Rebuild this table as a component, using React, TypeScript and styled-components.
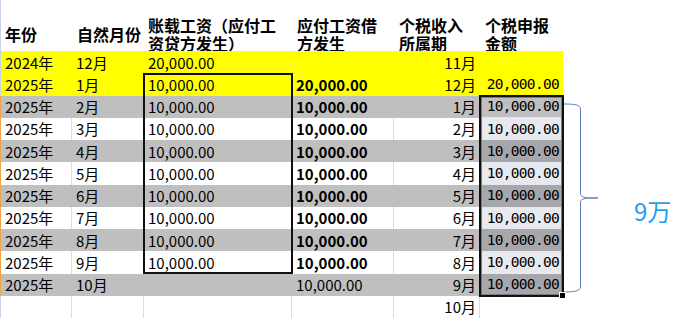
import React from "react";
import styled, { createGlobalStyle } from "styled-components";

const GlobalStyle = createGlobalStyle`
  html, body {
    margin: 0;
    padding: 0;
    background: #ffffff;
  }
  body {
    font-family: "Noto Sans CJK SC", "Noto Sans", sans-serif;
    color: #000;
  }
`;

const COLS = [72, 72, 148, 102, 86, 83];
const HEADER_H = 51;
const ROW_H = 22.25;

type Tone = "yellow" | "grey" | "white";
type Sel = "active" | "tint" | undefined;

const toneBg = (tone: Tone, sel: Sel) => {
  if (sel === "active") return "#bfbfbf";
  if (sel === "tint") return tone === "grey" ? "#a6a7ac" : "#e7e9f1";
  if (tone === "yellow") return "#ffff00";
  if (tone === "grey") return "#bfbfbf";
  return "#ffffff";
};

const Page = styled.div`
  display: flex;
  align-items: flex-start;
  width: 699px;
  height: 324px;
  overflow: hidden;
`;

const Sheet = styled.div`
  position: relative;
  display: grid;
  grid-template-columns: ${COLS.map((c) => c + "px").join(" ")};
  grid-template-rows: ${HEADER_H}px repeat(12, ${ROW_H}px);
`;

const HeadCell = styled.div<{ $pad?: number; $lead?: boolean }>`
  display: flex;
  align-items: center;
  padding: 16px 0 0 ${(p) => p.$pad ?? 5}px;
  font-size: 16px;
  font-weight: 700;
  line-height: 18px;
  white-space: nowrap;
  border-left: ${(p) => (p.$lead ? "1px solid #c9d3e6" : "none")};
`;

const Cell = styled.div<{
  $tone: Tone;
  $right?: boolean;
  $bold?: boolean;
  $mono?: boolean;
  $sel?: Sel;
  $lead?: string;
  $last?: boolean;
}>`
  box-sizing: border-box;
  display: flex;
  align-items: center;
  justify-content: ${(p) => (p.$right ? "flex-end" : "flex-start")};
  padding: ${(p) => (p.$right ? "0 3px 0 0" : "0 0 0 4px")};
  background: ${(p) => toneBg(p.$tone, p.$sel)};
  border-left: ${(p) => (p.$lead ? `1px solid ${p.$lead}` : "none")};
  border-right: 1px solid
    ${(p) => (p.$tone === "white" && !p.$last ? "#d5dbe8" : "transparent")};
  box-shadow: ${(p) =>
    p.$sel === "active" ? "inset 0 0 0 1px #e4e4e4" : "none"};
  font-family: ${(p) =>
    p.$mono
      ? '"DejaVu Sans Mono", "Liberation Mono", monospace'
      : '"Noto Sans CJK SC", "Noto Sans", sans-serif'};
  font-size: ${(p) => (p.$mono ? "14.5px" : "15px")};
  letter-spacing: ${(p) => (p.$mono ? "-0.7px" : "normal")};
  font-weight: ${(p) => (p.$bold ? 700 : 400)};
  white-space: nowrap;
  line-height: 1;
`;

const Outline = styled.div<{ $top: number; $left: number; $w: number; $h: number; $thick: number }>`
  position: absolute;
  box-sizing: border-box;
  top: ${(p) => p.$top}px;
  left: ${(p) => p.$left}px;
  width: ${(p) => p.$w}px;
  height: ${(p) => p.$h}px;
  border: ${(p) => p.$thick}px solid #111;
  pointer-events: none;
`;

const SelectionFrame = styled(Outline)`
  box-shadow: inset 0 0 0 1px #7c7c7c;
`;

const FillHandle = styled.div`
  position: absolute;
  right: -4px;
  bottom: -4px;
  width: 5px;
  height: 5px;
  background: #000;
  border: 1px solid #fff;
`;

const Brace = styled.svg`
  flex: none;
  margin-top: 101px;
  margin-left: -1px;
`;

const Note = styled.div`
  margin: 199px 0 0 34px;
  font-size: 24px;
  line-height: 24px;
  color: #1ea0f0;
  white-space: nowrap;
`;

type Row = {
  year: string;
  month: string;
  booked: string;
  debit: string;
  debitBold: boolean;
  period: string;
  declared: string;
};

const rows: Row[] = [
  { year: "2024年", month: "12月", booked: "20,000.00", debit: "", debitBold: false, period: "11月", declared: "" },
  { year: "2025年", month: "1月", booked: "10,000.00", debit: "20,000.00", debitBold: true, period: "12月", declared: "20,000.00" },
  ...[2, 3, 4, 5, 6, 7, 8, 9].map((m) => ({
    year: "2025年",
    month: `${m}月`,
    booked: "10,000.00",
    debit: "10,000.00",
    debitBold: true,
    period: `${m - 1}月`,
    declared: "10,000.00",
  })),
  { year: "2025年", month: "10月", booked: "", debit: "10,000.00", debitBold: false, period: "9月", declared: "10,000.00" },
  { year: "", month: "", booked: "", debit: "", debitBold: false, period: "10月", declared: "" },
];

const toneOf = (i: number): Tone => {
  if (i < 2) return "yellow";
  if (i === 11) return "white";
  return i % 2 === 0 ? "grey" : "white";
};

const selOf = (i: number): Sel => {
  if (i === 2) return "active";
  if (i > 2 && i <= 10) return "tint";
  return undefined;
};

const colLeft = (c: number) => COLS.slice(0, c).reduce((a, b) => a + b, 0);
const rowTop = (r: number) => HEADER_H + r * ROW_H;

export default function App() {
  return (
    <Page>
      <GlobalStyle />
      <Sheet>
        <HeadCell $pad={4} $lead>年份</HeadCell>
        <HeadCell>自然月份</HeadCell>
        <HeadCell $pad={4}>
          账载工资（应付工
          <br />
          资贷方发生）
        </HeadCell>
        <HeadCell>
          应付工资借
          <br />
          方发生
        </HeadCell>
        <HeadCell>
          个税收入
          <br />
          所属期
        </HeadCell>
        <HeadCell>
          个税申报
          <br />
          金额
        </HeadCell>

        {rows.map((r, i) => {
          const tone = toneOf(i);
          const lead = i >= 2 && i <= 10 ? "#f0a24a" : "#c9d3e6";
          return (
            <React.Fragment key={i}>
              <Cell $tone={tone} $lead={lead}>{r.year}</Cell>
              <Cell $tone={tone}>{r.month}</Cell>
              <Cell $tone={tone}>{r.booked}</Cell>
              <Cell $tone={tone} $bold={r.debitBold}>{r.debit}</Cell>
              <Cell $tone={tone} $right>{r.period}</Cell>
              <Cell $tone={tone} $right $mono $sel={selOf(i)} $last>
                {r.declared}
              </Cell>
            </React.Fragment>
          );
        })}

        <Outline
          $thick={2}
          $top={rowTop(1) - 0.5}
          $left={colLeft(2) - 1}
          $w={COLS[2] + 2}
          $h={ROW_H * 9 + 1}
        />
        <SelectionFrame
          $thick={2}
          $top={rowTop(2) - 1}
          $left={colLeft(5) - 1}
          $w={COLS[5] + 2}
          $h={ROW_H * 9 + 2}
        >
          <FillHandle />
        </SelectionFrame>
      </Sheet>

      <Brace width="38" height="194" viewBox="0 0 38 194">
        <path
          d="M1 3 C12 3 18.5 3.5 18.5 8 L18.5 93 C18.5 96 22 97 36 97 M36 97 C22 97 18.5 98 18.5 101 L18.5 186 C18.5 190 12 191 1 191"
          fill="none"
          stroke="#5a80b8"
          strokeWidth="1"
        />
      </Brace>
      <Note>9万</Note>
    </Page>
  );
}
